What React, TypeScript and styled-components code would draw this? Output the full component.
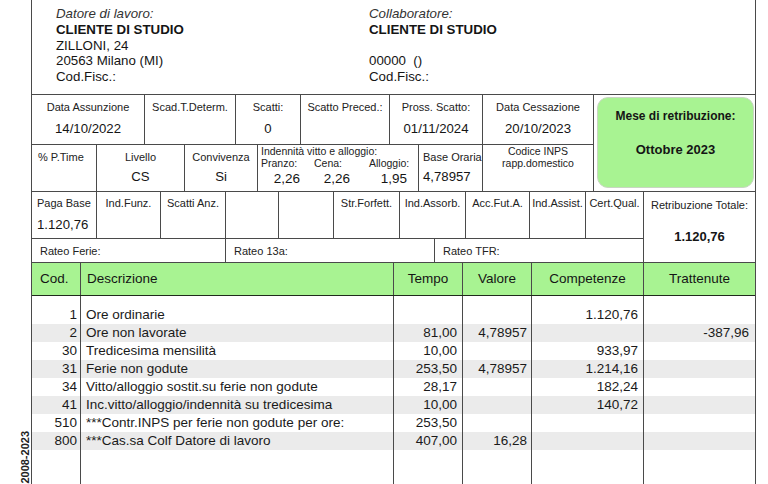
import React from "react";
import styled, { createGlobalStyle } from "styled-components";

const LINE = "#4a4a4a";
const GREEN = "#a8f392";

const GlobalStyle = createGlobalStyle`
  html, body { margin: 0; padding: 0; background: #fff; }
  body { font-family: "Liberation Sans", Arial, Helvetica, sans-serif; color: #151515; }
  * { box-sizing: border-box; }
`;

const Page = styled.div`
  display: flex;
  height: 484px;
  overflow: hidden;
`;

const Gutter = styled.div`
  width: 31px;
  display: flex;
  align-items: flex-end;
  justify-content: flex-end;
`;

const Stamp = styled.div`
  writing-mode: vertical-rl;
  transform: rotate(180deg);
  font-size: 11px;
  line-height: 12px;
  font-weight: bold;
  color: #222;
  white-space: nowrap;
`;

const Sheet = styled.div`
  width: 725px;
  height: 100%;
  border-left: 1px solid ${LINE};
  border-right: 1px solid ${LINE};
  display: flex;
  flex-direction: column;
`;

const Header = styled.div`
  height: 95px;
  flex: none;
  border-bottom: 1px solid ${LINE};
  display: grid;
  grid-template-columns: 313px 1fr;
  padding: 6px 0 0 24px;
  font-size: 13.3px;
  line-height: 15.8px;
`;

const HeaderCol = styled.div`
  display: flex;
  flex-direction: column;
`;

const Caption = styled.div`
  font-style: italic;
  color: #333;
`;

const Name = styled.div`
  font-weight: bold;
`;

const Line = styled.div`
  min-height: 15.8px;
  white-space: pre;
`;

const Block = styled.div`
  display: flex;
  flex: none;
  border-bottom: 1px solid ${LINE};
`;

const Rows = styled.div<{ $w: number }>`
  width: ${(p) => p.$w}px;
  flex: none;
  border-right: 1px solid ${LINE};
  display: flex;
  flex-direction: column;
`;

const Row = styled.div<{ $cols: string; $h: number; $last?: boolean }>`
  display: grid;
  grid-template-columns: ${(p) => p.$cols};
  height: ${(p) => p.$h}px;
  border-bottom: ${(p) => (p.$last ? "none" : `1px solid ${LINE}`)};
`;

const Cell = styled.div<{ $align?: "center" | "flex-start"; $pt?: number; $pl?: number; $gap?: number }>`
  border-right: 1px solid ${LINE};
  display: flex;
  flex-direction: column;
  align-items: ${(p) => p.$align ?? "center"};
  padding-top: ${(p) => p.$pt ?? 6}px;
  padding-left: ${(p) => p.$pl ?? 0}px;
  gap: ${(p) => p.$gap ?? 7}px;
  min-width: 0;
  &:last-child { border-right: none; }
`;

const InlineCell = styled.div<{ $pl?: number }>`
  border-right: 1px solid ${LINE};
  display: flex;
  align-items: center;
  padding-left: ${(p) => p.$pl ?? 8}px;
  font-size: 11px;
  color: #222;
  &:last-child { border-right: none; }
`;

const Label = styled.div`
  font-size: 11px;
  line-height: 13px;
  color: #222;
  white-space: nowrap;
`;

const Value = styled.div`
  font-size: 13.2px;
  line-height: 16px;
  white-space: nowrap;
`;

const SmallLabel = styled.div`
  font-size: 10.5px;
  line-height: 12px;
  color: #222;
  white-space: nowrap;
`;

const MealCell = styled.div`
  border-right: 1px solid ${LINE};
  display: flex;
  flex-direction: column;
  padding-left: 3px;
`;

const MealGrid = styled.div`
  display: grid;
  grid-template-columns: 53px 55px 50px;
`;

const MealItem = styled.div<{ $vr: number }>`
  display: flex;
  flex-direction: column;
  & > :last-child {
    text-align: right;
    padding-right: ${(p) => p.$vr}px;
    font-size: 13.5px;
    line-height: 15px;
    margin-top: 2px;
  }
`;

const MeseCell = styled.div`
  flex: 1;
  padding: 2px 1px 3px 3px;
  display: flex;
`;

const MeseBox = styled.div`
  flex: 1;
  background: ${GREEN};
  border: 1px solid #c9d6c2;
  border-radius: 11px;
  display: flex;
  flex-direction: column;
  align-items: center;
  padding-top: 11px;
  gap: 20px;
  font-weight: bold;
  font-size: 12px;
  line-height: 14px;
  & > :last-child { font-size: 13px; }
`;

const TotaleCell = styled.div`
  flex: 1;
  display: flex;
  flex-direction: column;
  align-items: center;
  padding-top: 7px;
  gap: 17px;
`;

const TotaleValue = styled.div`
  font-size: 13px;
  line-height: 16px;
  font-weight: bold;
`;

const COLS = "49px 313px 69px 69px 112px 111px";

const TableHead = styled.div`
  display: grid;
  grid-template-columns: ${COLS};
  height: 33px;
  flex: none;
  background: ${GREEN};
  border-bottom: 1px solid #1f2a1c;
`;

const HeadCell = styled.div<{ $left?: number }>`
  display: flex;
  align-items: center;
  justify-content: ${(p) => (p.$left !== undefined ? "flex-start" : "center")};
  padding-left: ${(p) => p.$left ?? 0}px;
  padding-bottom: 2px;
  font-size: 13.5px;
  border-right: 1px solid ${LINE};
  &:last-child { border-right: none; }
`;

const TableBody = styled.div`
  flex: 1;
  display: grid;
  grid-template-columns: ${COLS};
  grid-template-rows: 10px repeat(8, 18px) 1fr;
`;

const BodyCell = styled.div<{ $right?: boolean; $pad: number; $shade?: boolean; $last?: boolean }>`
  font-size: 13.5px;
  line-height: 18px;
  white-space: nowrap;
  overflow: hidden;
  text-align: ${(p) => (p.$right ? "right" : "left")};
  ${(p) => (p.$right ? `padding-right: ${p.$pad}px;` : `padding-left: ${p.$pad}px;`)}
  background: ${(p) => (p.$shade ? "#ebebeb" : "transparent")};
  border-right: ${(p) => (p.$last ? "none" : `1px solid ${LINE}`)};
  color: #1a1a1a;
`;

const rows: string[][] = [
  ["1", "Ore ordinarie", "", "", "1.120,76", ""],
  ["2", "Ore non lavorate", "81,00", "4,78957", "", "-387,96"],
  ["30", "Tredicesima mensilità", "10,00", "", "933,97", ""],
  ["31", "Ferie non godute", "253,50", "4,78957", "1.214,16", ""],
  ["34", "Vitto/alloggio sostit.su ferie non godute", "28,17", "", "182,24", ""],
  ["41", "Inc.vitto/alloggio/indennità su tredicesima", "10,00", "", "140,72", ""],
  ["510", "***Contr.INPS per ferie non godute per ore:", "253,50", "", "", ""],
  ["800", "***Cas.sa Colf Datore di lavoro", "407,00", "16,28", "", ""],
];

const colSpec = [
  { right: true, pad: 3 },
  { right: false, pad: 5 },
  { right: true, pad: 5 },
  { right: true, pad: 4 },
  { right: true, pad: 5 },
  { right: true, pad: 6 },
];

export default function App() {
  const bodyRows = [["", "", "", "", "", ""], ...rows, ["", "", "", "", "", ""]];
  return (
    <>
      <GlobalStyle />
      <Page>
        <Gutter>
          <Stamp>2008-2023</Stamp>
        </Gutter>
        <Sheet>
          <Header>
            <HeaderCol>
              <Caption>Datore di lavoro:</Caption>
              <Name>CLIENTE DI STUDIO</Name>
              <Line>ZILLONI, 24</Line>
              <Line>20563 Milano (MI)</Line>
              <Line>Cod.Fisc.:</Line>
            </HeaderCol>
            <HeaderCol>
              <Caption>Collaboratore:</Caption>
              <Name>CLIENTE DI STUDIO</Name>
              <Line />
              <Line>{"00000  ()"}</Line>
              <Line>Cod.Fisc.:</Line>
            </HeaderCol>
          </Header>

          <Block>
            <Rows $w={562}>
              <Row $cols="113px 91px 65px 89px 93px 110px" $h={50}>
                <Cell><Label>Data Assunzione</Label><Value>14/10/2022</Value></Cell>
                <Cell><Label>Scad.T.Determ.</Label></Cell>
                <Cell><Label>Scatti:</Label><Value>0</Value></Cell>
                <Cell><Label>Scatto Preced.:</Label></Cell>
                <Cell><Label>Pross. Scatto:</Label><Value>01/11/2024</Value></Cell>
                <Cell><Label>Data Cessazione</Label><Value>20/10/2023</Value></Cell>
              </Row>
              <Row $cols="65px 88px 73px 161px 64px 110px" $h={46} $last>
                <Cell $align="flex-start" $pl={6} $pt={6}><Label>% P.Time</Label></Cell>
                <Cell $pt={6} $gap={5}><Label>Livello</Label><Value>CS</Value></Cell>
                <Cell $pt={6} $gap={5}><Label>Convivenza</Label><Value>Si</Value></Cell>
                <MealCell>
                  <SmallLabel>Indennità vitto e alloggio:</SmallLabel>
                  <MealGrid>
                    <MealItem $vr={14}><SmallLabel>Pranzo:</SmallLabel><div>2,26</div></MealItem>
                    <MealItem $vr={19}><SmallLabel>Cena:</SmallLabel><div>2,26</div></MealItem>
                    <MealItem $vr={12}><SmallLabel>Alloggio:</SmallLabel><div>1,95</div></MealItem>
                  </MealGrid>
                </MealCell>
                <Cell $align="flex-start" $pl={4} $pt={6} $gap={5}><Label>Base Oraria</Label><Value>4,78957</Value></Cell>
                <Cell $pt={0} $gap={0}><SmallLabel>Codice INPS</SmallLabel><SmallLabel>rapp.domestico</SmallLabel></Cell>
              </Row>
            </Rows>
            <MeseCell>
              <MeseBox>
                <div>Mese di retribuzione:</div>
                <div>Ottobre 2023</div>
              </MeseBox>
            </MeseCell>
          </Block>

          <Block>
            <Rows $w={612}>
              <Row $cols="65px 64px 65px 53px 55px 66px 66px 64px 56px 57px" $h={47}>
                <Cell $align="flex-start" $pl={5} $pt={5} $gap={7}><Label>Paga Base</Label><Value>1.120,76</Value></Cell>
                <Cell $pt={5}><Label>Ind.Funz.</Label></Cell>
                <Cell $pt={5}><Label>Scatti Anz.</Label></Cell>
                <Cell $pt={5} />
                <Cell $pt={5} />
                <Cell $pt={5}><Label>Str.Forfett.</Label></Cell>
                <Cell $pt={5}><Label>Ind.Assorb.</Label></Cell>
                <Cell $pt={5}><Label>Acc.Fut.A.</Label></Cell>
                <Cell $pt={5}><Label>Ind.Assist.</Label></Cell>
                <Cell $pt={5}><Label>Cert.Qual.</Label></Cell>
              </Row>
              <Row $cols="194px 209px 208px" $h={23} $last>
                <InlineCell>Rateo Ferie:</InlineCell>
                <InlineCell>Rateo 13a:</InlineCell>
                <InlineCell>Rateo TFR:</InlineCell>
              </Row>
            </Rows>
            <TotaleCell>
              <Label>Retribuzione Totale:</Label>
              <TotaleValue>1.120,76</TotaleValue>
            </TotaleCell>
          </Block>

          <TableHead>
            <HeadCell $left={8}>Cod.</HeadCell>
            <HeadCell $left={6}>Descrizione</HeadCell>
            <HeadCell>Tempo</HeadCell>
            <HeadCell>Valore</HeadCell>
            <HeadCell>Competenze</HeadCell>
            <HeadCell>Trattenute</HeadCell>
          </TableHead>

          <TableBody>
            {bodyRows.map((r, ri) =>
              r.map((v, ci) => (
                <BodyCell
                  key={`${ri}-${ci}`}
                  $right={colSpec[ci].right}
                  $pad={colSpec[ci].pad}
                  $shade={ri >= 1 && ri <= 8 && ri % 2 === 0}
                  $last={ci === 5}
                >
                  {v}
                </BodyCell>
              ))
            )}
          </TableBody>
        </Sheet>
      </Page>
    </>
  );
}
